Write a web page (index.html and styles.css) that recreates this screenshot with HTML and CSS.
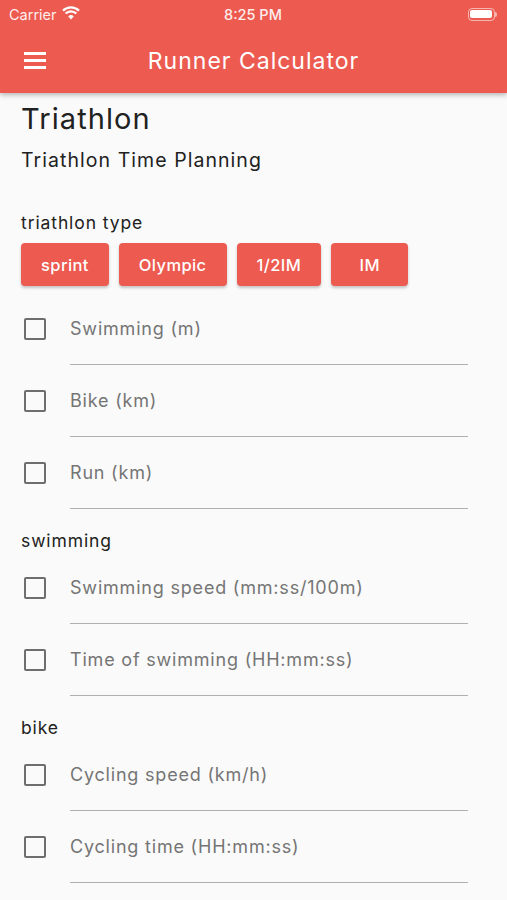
FILE: index.html
```html
<!DOCTYPE html>
<html lang="en">
<head>
    <meta charset="UTF-8">
    <meta name="viewport" content="width=device-width, initial-scale=1.0">
    <title>Runner Calculator</title>
    <link rel="stylesheet" href="styles.css">
</head>
<body>

    <div class="appbar">
        <div class="status">
            <div class="carrier">
                Carrier
                <svg class="wifi" width="18" height="14" viewBox="0 0 18 14">
                    <path d="M9 13.5 L6.2 10.4 A4 4 0 0 1 11.8 10.4 Z" fill="#fff"/>
                    <path d="M3.6 7.6 A7.6 7.6 0 0 1 14.4 7.6" stroke="#fff" stroke-width="2.2" fill="none"/>
                    <path d="M1 4.6 A11.4 11.4 0 0 1 17 4.6" stroke="#fff" stroke-width="2.2" fill="none"/>
                </svg>
            </div>
            <div class="clock">8:25 PM</div>
            <div class="battery">
                <div class="battery-body"><div class="battery-fill"></div></div>
                <div class="battery-nub"></div>
            </div>
        </div>
        <div class="toolbar">
            <div class="menu">
                <span></span><span></span><span></span>
            </div>
            <div class="app-title">Runner Calculator</div>
        </div>
    </div>

    <div class="content">
        <h1 class="page-title">Triathlon</h1>
        <div class="subtitle">Triathlon Time Planning</div>

        <div class="section-label first">triathlon type</div>
        <div class="buttons">
            <button class="type-btn">sprint</button>
            <button class="type-btn">Olympic</button>
            <button class="type-btn">1/2IM</button>
            <button class="type-btn">IM</button>
        </div>

        <div class="field-row">
            <span class="checkbox"></span>
            <div class="field"><span class="hint">Swimming (m)</span></div>
        </div>
        <div class="field-row">
            <span class="checkbox"></span>
            <div class="field"><span class="hint">Bike (km)</span></div>
        </div>
        <div class="field-row">
            <span class="checkbox"></span>
            <div class="field"><span class="hint">Run (km)</span></div>
        </div>

        <div class="section-label">swimming</div>
        <div class="field-row">
            <span class="checkbox"></span>
            <div class="field"><span class="hint">Swimming speed (mm:ss/100m)</span></div>
        </div>
        <div class="field-row">
            <span class="checkbox"></span>
            <div class="field"><span class="hint">Time of swimming (HH:mm:ss)</span></div>
        </div>

        <div class="section-label">bike</div>
        <div class="field-row">
            <span class="checkbox"></span>
            <div class="field"><span class="hint">Cycling speed (km/h)</span></div>
        </div>
        <div class="field-row">
            <span class="checkbox"></span>
            <div class="field"><span class="hint">Cycling time (HH:mm:ss)</span></div>
        </div>
    </div>

</body>
</html>
```

FILE: styles.css
```css
* { margin: 0; padding: 0; box-sizing: border-box; }
body { background: #fafafa; color: #212121; font-family: Inter, Roboto, "Noto Sans", Arial, sans-serif; width: 507px; height: 900px; overflow: hidden; }

/* app bar */
.appbar { background: #ec5a50; color: #fff; height: 93px; box-shadow: 0 2px 5px rgba(0, 0, 0, 0.28); position: relative; z-index: 1; }
.status { height: 28px; display: flex; align-items: center; justify-content: space-between; padding: 0 10px 0 9px; font-size: 14.5px; color: #fdeeed; }
.carrier { display: flex; align-items: center; gap: 5px; width: 110px; }
.wifi { margin-top: -2px; }
.clock { font-weight: 500; }
.battery { width: 110px; display: flex; justify-content: flex-end; align-items: center; }
.battery-body { width: 27px; height: 13px; border: 1px solid rgba(255, 255, 255, 0.55); border-radius: 4px; padding: 1.5px; }
.battery-fill { width: 100%; height: 100%; background: #fff; border-radius: 2px; }
.battery-nub { width: 2px; height: 5px; background: rgba(255, 255, 255, 0.55); border-radius: 0 2px 2px 0; }
.toolbar { height: 65px; display: flex; align-items: center; position: relative; }
.menu { width: 22px; margin-left: 24px; display: flex; flex-direction: column; gap: 4.5px; }
.menu span { display: block; height: 2.5px; background: #fff; }
.app-title { position: absolute; left: 0; right: 0; text-align: center; font-size: 23px; font-weight: 400; letter-spacing: 1px; pointer-events: none; }

/* page */
.content { padding: 8px 21px 0 21px; }
.page-title { font-size: 29px; font-weight: 400; line-height: 36px; letter-spacing: 1.1px; }
.subtitle { font-size: 19.5px; line-height: 26px; margin-top: 10px; letter-spacing: 1.05px; }
.section-label { font-size: 17.5px; line-height: 22px; margin-top: 21px; letter-spacing: 0.9px; }
.section-label.first { margin-top: 38px; line-height: 24px; }

.buttons { display: flex; gap: 10px; margin-top: 8px; margin-bottom: 7px; }
.type-btn {
    height: 43px; min-width: 77px; padding: 0 20px; border: none; border-radius: 4px;
    background: #ec5a50; color: #fff; font-family: inherit; font-size: 16.5px; font-weight: 500; letter-spacing: 0.4px;
    box-shadow: 0 2px 3px rgba(0, 0, 0, 0.22);
}

.field-row { display: flex; align-items: center; padding-right: 18px; }
.checkbox { width: 22px; height: 22px; border: 2.4px solid #6e6e6e; border-radius: 2px; margin-left: 3px; margin-right: 24px; flex-shrink: 0; }
.field { flex: 1; height: 72px; border-bottom: 1.3px solid #b0b0b0; padding-top: 24px; }
.hint { font-size: 18px; line-height: 24px; color: #757575; letter-spacing: 0.8px; }
```
